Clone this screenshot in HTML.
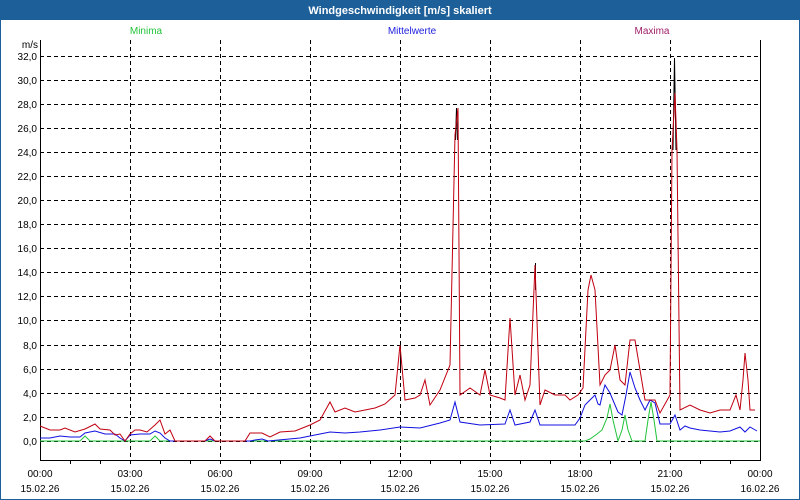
<!DOCTYPE html>
<html><head><meta charset="utf-8"><style>
html,body{margin:0;padding:0;width:800px;height:500px;overflow:hidden;background:#fff}
svg{display:block}
text{font-family:"Liberation Sans",sans-serif;font-size:10px}
</style></head><body>
<svg width="800" height="500" viewBox="0 0 800 500">
<rect x="0" y="0" width="800" height="500" fill="#1d5f98"/>
<rect x="1" y="20" width="798" height="479" fill="#fff"/>
<text x="400" y="14" fill="#fff" text-anchor="middle" style="font-weight:bold;font-size:11px">Windgeschwindigkeit [m/s] skaliert</text>
<text x="146" y="34" fill="#22c33a" text-anchor="middle">Minima</text>
<text x="412" y="34" fill="#2020e0" text-anchor="middle">Mittelwerte</text>
<text x="652" y="34" fill="#a0206a" text-anchor="middle">Maxima</text>
<text x="38" y="48" text-anchor="end" fill="#000">m/s</text>
<g stroke="#000" stroke-dasharray="4,3" stroke-width="1">
<line x1="40" y1="56.5" x2="760" y2="56.5"/><line x1="40" y1="80.5" x2="760" y2="80.5"/>
<line x1="40" y1="104.5" x2="760" y2="104.5"/><line x1="40" y1="128.5" x2="760" y2="128.5"/>
<line x1="40" y1="152.5" x2="760" y2="152.5"/><line x1="40" y1="176.5" x2="760" y2="176.5"/>
<line x1="40" y1="200.5" x2="760" y2="200.5"/><line x1="40" y1="224.5" x2="760" y2="224.5"/>
<line x1="40" y1="248.5" x2="760" y2="248.5"/><line x1="40" y1="272.5" x2="760" y2="272.5"/>
<line x1="40" y1="296.5" x2="760" y2="296.5"/><line x1="40" y1="320.5" x2="760" y2="320.5"/>
<line x1="40" y1="345.5" x2="760" y2="345.5"/><line x1="40" y1="369.5" x2="760" y2="369.5"/>
<line x1="40" y1="393.5" x2="760" y2="393.5"/><line x1="40" y1="417.5" x2="760" y2="417.5"/>
<line x1="40" y1="441.5" x2="760" y2="441.5"/>
<line x1="130.5" y1="40" x2="130.5" y2="460"/><line x1="220.5" y1="40" x2="220.5" y2="460"/>
<line x1="310.5" y1="40" x2="310.5" y2="460"/><line x1="400.5" y1="40" x2="400.5" y2="460"/>
<line x1="490.5" y1="40" x2="490.5" y2="460"/><line x1="580.5" y1="40" x2="580.5" y2="460"/>
<line x1="670.5" y1="40" x2="670.5" y2="460"/>
</g>
<g stroke="#000" stroke-width="1">
<line x1="40.5" y1="40" x2="40.5" y2="461"/><line x1="40" y1="460.5" x2="761" y2="460.5"/>
<line x1="760.5" y1="40" x2="760.5" y2="461"/>
<path d="M70.5 460v4M100.5 460v4M130.5 460v4M160.5 460v4M190.5 460v4M220.5 460v4M250.5 460v4M280.5 460v4M310.5 460v4M340.5 460v4M370.5 460v4M400.5 460v4M430.5 460v4M460.5 460v4M490.5 460v4M520.5 460v4M550.5 460v4M580.5 460v4M610.5 460v4M640.5 460v4M670.5 460v4M700.5 460v4M730.5 460v4"/>
</g>
<g fill="none" stroke-width="1">
<polyline stroke="#000" points="400.5,370 400.5,345"/>
<polyline stroke="#000" points="455.5,140 456.5,108 457.5,140"/>
<polyline stroke="#000" points="535.5,290 535.5,263"/>
<polyline stroke="#000" points="673,150 674.5,58 676,150"/>
<polyline stroke="#22c33a" points="40,441 80,441 85,436 90,441 150,441 155,436 160,441 585,441 590,439 597,434 602,430 607,418 610,404 613,420 618,441 622,430 625,415 628,430 632,441 645,441 648,420 651,402 654,420 657,441 760,441"/>
<polyline stroke="#1010e0" points="40,438 50,438 60,436 70,437 80,437 85,433 95,431 105,434 115,434 120,438 125,441 130,435 140,434 150,434 155,431 160,433 165,438 170,441 205,441 210,439 215,441 250,441 255,440 262,439 268,441 300,438 315,435 330,432 345,433 360,432 380,430 400,427 420,428 440,423 450,420 455,402 460,422 480,425 505,424 510,410 515,425 530,422 535,410 540,425 575,425 580,418 585,405 590,400 595,395 598,404 600,405 603,392 605,385 610,393 615,405 618,412 622,415 626,395 630,372 635,388 640,400 645,410 650,400 655,403 660,424 670,424 675,415 680,430 685,426 690,428 700,430 720,432 730,431 740,427 745,432 750,427 757,431"/>
<polyline stroke="#c00010" points="40,426 50,430 60,430 65,428 75,432 85,429 95,424 100,429 110,430 115,435 120,434 125,441 130,434 135,430 140,430 147,432 155,425 160,420 165,434 170,430 175,441 205,441 210,436 215,441 245,441 250,433 262,433 270,437 280,432 295,431 310,425 320,420 330,402 335,412 345,408 355,412 365,410 375,408 385,404 395,395 400,345 405,400 415,398 420,395 425,380 430,405 440,390 450,365 455,135 458,108 460,395 470,388 480,395 485,370 490,395 500,398 505,400 510,318 515,395 520,375 525,400 530,385 535,265 540,405 545,390 555,395 565,395 570,400 578,395 583,388 588,290 591,275 595,290 600,385 605,375 610,370 615,345 620,380 625,385 630,340 635,340 640,370 645,400 655,400 660,413 670,395 672,150 675,93 677,150 680,410 690,405 700,410 710,413 720,410 730,410 736,395 740,410 743,380 745,353 748,380 750,410 755,410"/>
</g>
<g text-anchor="end" fill="#000">
<text x="37" y="60">32,0</text><text x="37" y="84">30,0</text><text x="37" y="108">28,0</text>
<text x="37" y="132">26,0</text><text x="37" y="156">24,0</text><text x="37" y="180">22,0</text>
<text x="37" y="204">20,0</text><text x="37" y="228">18,0</text><text x="37" y="252">16,0</text>
<text x="37" y="276">14,0</text><text x="37" y="300">12,0</text><text x="37" y="324">10,0</text>
<text x="37" y="349">8,0</text><text x="37" y="373">6,0</text><text x="37" y="397">4,0</text>
<text x="37" y="421">2,0</text><text x="37" y="445">0,0</text>
</g>
<g text-anchor="middle" fill="#000">
<text x="40" y="477">00:00</text><text x="40" y="492">15.02.26</text>
<text x="130" y="477">03:00</text><text x="130" y="492">15.02.26</text>
<text x="220" y="477">06:00</text><text x="220" y="492">15.02.26</text>
<text x="310" y="477">09:00</text><text x="310" y="492">15.02.26</text>
<text x="400" y="477">12:00</text><text x="400" y="492">15.02.26</text>
<text x="490" y="477">15:00</text><text x="490" y="492">15.02.26</text>
<text x="580" y="477">18:00</text><text x="580" y="492">15.02.26</text>
<text x="670" y="477">21:00</text><text x="670" y="492">15.02.26</text>
<text x="760" y="477">00:00</text><text x="760" y="492">16.02.26</text>
</g>
</svg>
</body></html>
